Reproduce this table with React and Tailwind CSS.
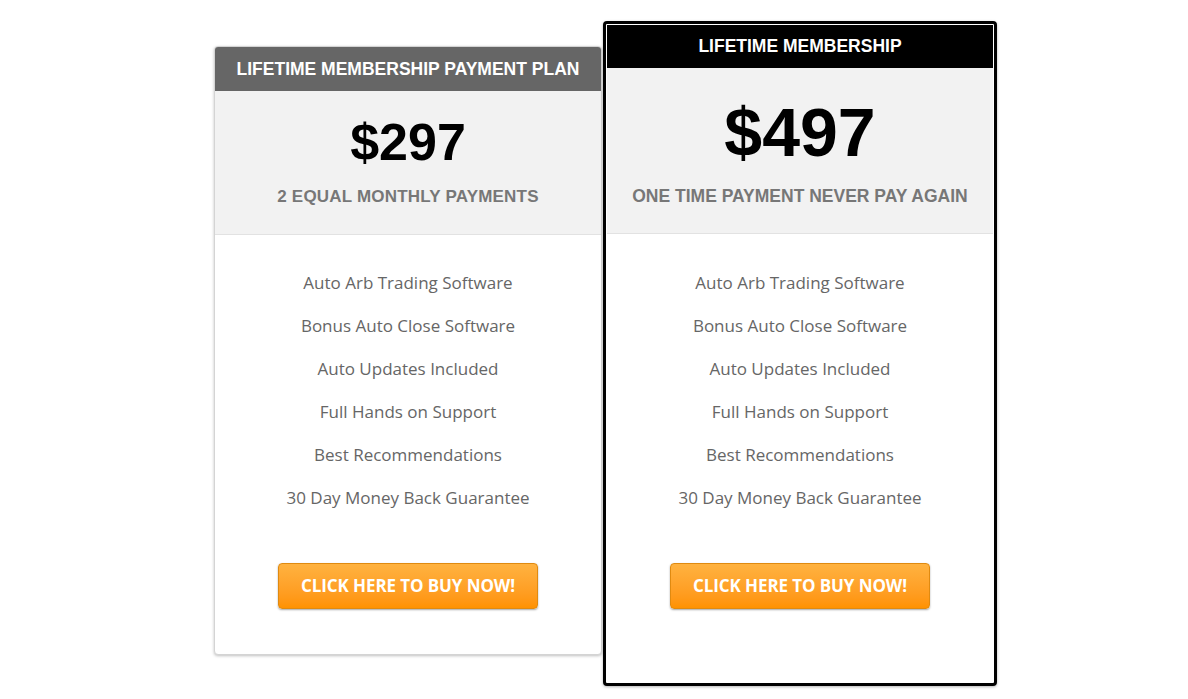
const FEATURES = [
  'Auto Arb Trading Software',
  'Bonus Auto Close Software',
  'Auto Updates Included',
  'Full Hands on Support',
  'Best Recommendations',
  '30 Day Money Back Guarantee',
]

function Features({ top }) {
  return (
    <ul
      className={`flex flex-col items-center gap-[18px] font-['Open_Sans',sans-serif] text-[17px] leading-[25px] text-[#666] ${top}`}
    >
      {FEATURES.map((f) => (
        <li key={f}>{f}</li>
      ))}
    </ul>
  )
}

function BuyButton() {
  return (
    <button
      type="button"
      className="h-[46px] w-[260px] rounded-[4px] border border-[#e08a10] bg-gradient-to-b from-[#ffb23f] to-[#ff9200] font-['Open_Sans',sans-serif] text-[17px] font-bold tracking-[-0.1px] text-white shadow-[0_1px_2px_rgba(0,0,0,0.35)]"
    >
      CLICK HERE TO BUY NOW!
    </button>
  )
}

export default function App() {
  return (
    <div className="flex h-[699px] w-[1188px] items-start bg-white pl-[214px] font-['Liberation_Sans',Arial,sans-serif]">
      <div className="mt-[46px] flex h-[609px] w-[388px] flex-col rounded-[4px] border border-[#d4d4d4] bg-white shadow-[0_1px_3px_rgba(0,0,0,0.25)]">
        <div className="flex h-[44px] items-center justify-center rounded-t-[3px] bg-[#666] text-[17.5px] font-bold text-white">
          LIFETIME MEMBERSHIP PAYMENT PLAN
        </div>
        <div className="flex h-[144px] flex-col items-center border-b border-[#e2e2e2] bg-[#f2f2f2]">
          <div className="mt-[21px] text-[52px] font-bold leading-[60px] text-black">$297</div>
          <div className="mt-[12px] text-[17px] font-bold tracking-[0.2px] text-[#777]">2 EQUAL MONTHLY PAYMENTS</div>
        </div>
        <Features top="pt-[35px]" />
        <div className="mt-[53px] flex justify-center">
          <BuyButton />
        </div>
      </div>

      <div className="mt-[21px] ml-[1px] flex h-[665px] w-[394px] flex-col rounded-[4px] border-[3px] border-black bg-white p-[1px] shadow-[0_1px_3px_rgba(0,0,0,0.3)]">
        <div className="flex h-[43px] items-center justify-center bg-black text-[17.5px] font-bold text-white">
          LIFETIME MEMBERSHIP
        </div>
        <div className="flex h-[166px] flex-col items-center border-b border-[#e2e2e2] bg-[#f2f2f2]">
          <div className="mt-[24px] text-[68px] font-bold leading-[80px] text-black">$497</div>
          <div className="mt-[11px] text-[17.5px] font-bold text-[#777]">ONE TIME PAYMENT NEVER PAY AGAIN</div>
        </div>
        <Features top="pt-[36px]" />
        <div className="mt-[53px] flex justify-center">
          <BuyButton />
        </div>
      </div>
    </div>
  )
}
